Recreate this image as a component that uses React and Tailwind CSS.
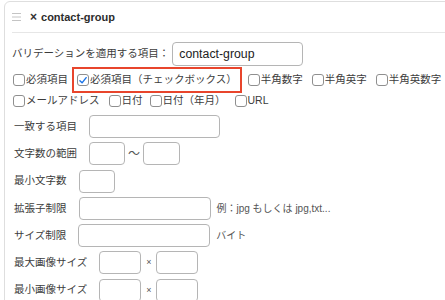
import React from 'react';

const font = { fontFamily: '"Liberation Sans", "Noto Sans CJK JP", sans-serif' };

const Box = ({ checked }) => (
  <span className="inline-flex h-[12px] w-[12px] shrink-0 items-center justify-center rounded-[3px] border border-[#8f8f8f] bg-white">
    {checked && (
      <svg viewBox="0 0 12 12" className="h-[11px] w-[11px]">
        <path d="M2.3 6.2 L4.9 8.8 L9.8 2.6" fill="none" stroke="#1a73e8" strokeWidth="1.7" strokeLinecap="round" strokeLinejoin="round" />
      </svg>
    )}
  </span>
);

const Check = ({ label, checked, className = '' }) => (
  <label className={`flex items-center gap-[1px] ${className}`}>
    <Box checked={checked} />
    <span>{label}</span>
  </label>
);

const Field = ({ w, className = '' }) => (
  <div className={`h-full rounded-[4px] border border-[#b5b5b5] bg-white ${w} ${className}`} />
);

const Row = ({ label, children }) => (
  <div className="flex h-[23px] items-center">
    <span className="mr-[12px] pl-[2px]">{label}</span>
    {children}
  </div>
);

export default function App() {
  return (
    <div className="h-[300px] w-[445px] overflow-hidden bg-white text-[10.5px] text-[#3c3c3c]" style={font}>
      <div className="ml-[4px] mt-[1px] w-[470px] rounded-tl-[6px] border border-[#dedede] pb-4">
        <div className="flex h-[30px] items-center pl-[7px]">
          <svg viewBox="0 0 9 8" className="h-[8px] w-[9px]">
            <path d="M0 0.5 H9 M0 4 H9 M0 7.5 H9" stroke="#c4c4c4" strokeWidth="1" />
          </svg>
          <span className="ml-[9px] text-[12px] font-bold text-[#333]">×</span>
          <span className="ml-[4px] text-[11px] font-bold text-[#2c2c2c]">contact-group</span>
        </div>
        <div className="ml-[7px] border-b border-[#e6e6e6]" />

        <div className="pl-[7px]">
          <div className="mt-[9px] flex h-[24px] items-center">
            <span>バリデーションを適用する項目：</span>
            <div className="ml-[3px] flex h-full w-[131px] items-center rounded-[4px] border border-[#b5b5b5] pl-[6px] text-[12.3px] text-[#222]">
              contact-group
            </div>
          </div>

          <div className="mt-[1px] flex h-[26px] items-center">
            <Check label="必須項目" className="ml-[1px]" />
            <div className="ml-[4px] flex h-full items-center border-2 border-[#e8452c] pl-[3px] pr-[3px]">
              <Check label="必須項目（チェックボックス）" checked />
            </div>
            <Check label="半角数字" className="ml-[6px]" />
            <Check label="半角英字" className="ml-[9px]" />
            <Check label="半角英数字" className="ml-[9px]" />
          </div>

          <div className="flex h-[16px] items-center">
            <Check label="メールアドレス" className="ml-[1px]" />
            <Check label="日付" className="ml-[9px]" />
            <Check label="日付（年月）" className="ml-[7px]" />
            <Check label="URL" className="ml-[9px]" />
          </div>

          <div className="mt-[6px] flex flex-col gap-[4.3px]">
            <Row label="一致する項目">
              <Field w="w-[131px]" />
            </Row>
            <Row label="文字数の範囲">
              <Field w="w-[36px]" />
              <span className="mx-[3px] text-[12px] text-[#555]">〜</span>
              <Field w="w-[37px]" />
            </Row>
            <Row label="最小文字数">
              <Field w="w-[36px]" />
            </Row>
            <Row label="拡張子制限">
              <Field w="w-[132px]" />
              <span className="ml-[6px] text-[10px] text-[#555]">例：jpg もしくは jpg,txt...</span>
            </Row>
            <Row label="サイズ制限">
              <Field w="w-[132px]" />
              <span className="ml-[6px] text-[10px] text-[#555]">バイト</span>
            </Row>
            <Row label="最大画像サイズ">
              <Field w="w-[42px]" />
              <span className="mx-[5px] text-[9px] text-[#555]">×</span>
              <Field w="w-[42px]" />
            </Row>
            <Row label="最小画像サイズ">
              <Field w="w-[42px]" />
              <span className="mx-[5px] text-[9px] text-[#555]">×</span>
              <Field w="w-[42px]" />
            </Row>
          </div>
        </div>
      </div>
    </div>
  );
}
